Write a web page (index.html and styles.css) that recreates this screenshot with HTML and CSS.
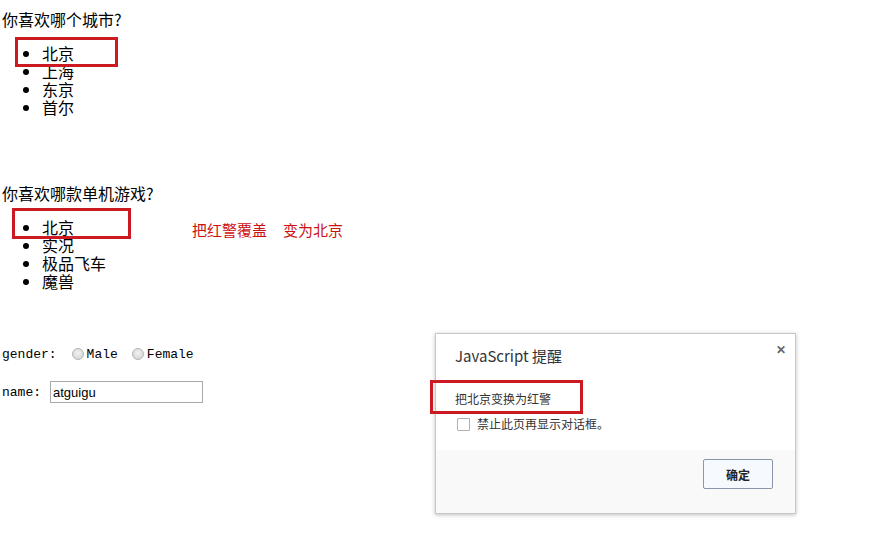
FILE: index.html
```html
<!DOCTYPE html>
<html lang="zh-CN">
<head>
    <meta charset="UTF-8">
    <title>DOM 练习</title>
    <link rel="stylesheet" href="styles.css">
</head>
<body>

<div class="page">
    <!-- 城市 -->
    <p class="question">你喜欢哪个城市?</p>
    <ul class="list" id="city">
        <li id="bj">北京</li>
        <li>上海</li>
        <li>东京</li>
        <li>首尔</li>
    </ul>

    <!-- 游戏 -->
    <p class="question question-game">你喜欢哪款单机游戏?</p>
    <div class="game-row">
        <ul class="list list-game" id="game">
            <li id="rl">北京</li>
            <li>实况</li>
            <li>极品飞车</li>
            <li>魔兽</li>
        </ul>
        <div class="actions">
            <span class="action">把红警覆盖</span>
            <span class="action">变为北京</span>
        </div>
    </div>

    <!-- 表单 -->
    <div class="form-row gender-row">
        <span class="field-label">gender:</span>
        <label class="radio radio-first"><input type="radio" name="gender" value="male">Male</label>
        <label class="radio"><input type="radio" name="gender" value="female">Female</label>
    </div>
    <div class="form-row name-row">
        <span class="field-label">name:</span>
        <input class="name-input" type="text" name="name" value="atguigu">
    </div>

    <!-- 标注框 -->
    <div class="mark mark-city"></div>
    <div class="mark mark-game"></div>
    <div class="mark mark-alert"></div>

    <!-- 浏览器 alert 对话框 -->
    <div class="alert-box">
        <div class="alert-head">
            <span class="alert-title">JavaScript 提醒</span>
            <span class="alert-close">&#x2715;</span>
        </div>
        <div class="alert-body">
            <p class="alert-msg">把北京变换为红警</p>
            <label class="alert-check"><span class="check-box"></span>禁止此页再显示对话框。</label>
        </div>
        <div class="alert-foot">
            <button class="alert-btn">确定</button>
        </div>
    </div>
</div>

</body>
</html>
```

FILE: styles.css
```css
/* base */
body {
    margin: 0;
    background: #ffffff;
    color: #000000;
    font-family: "Noto Sans CJK SC", sans-serif;
    font-size: 16px;
}
.page {
    position: relative;
    width: 869px;
    height: 542px;
    padding: 10px 2px 0;
    box-sizing: border-box;
}
/* questions and lists */
.question {
    margin: 0;
    line-height: 18px;
}
.question-game {
    margin-top: 68px;
}
.list {
    margin: 16px 0 0;
    padding-left: 40px;
    line-height: 18px;
}
.game-row {
    display: flex;
    align-items: flex-start;
}
.list-game {
    width: 150px;
}
.actions {
    display: flex;
    gap: 16px;
    margin-top: 19px;
    color: #cc1111;
    font-size: 15px;
    line-height: 18px;
}
/* form rows */
.form-row {
    font-family: "Liberation Mono", monospace;
    font-size: 13px;
    display: flex;
    align-items: center;
}
.gender-row {
    margin-top: 55px;
    height: 18px;
}
.name-row {
    margin-top: 18px;
    height: 22px;
}
.radio {
    display: flex;
    align-items: center;
    margin-left: 14px;
}
.radio-first {
    margin-left: 15px;
}
.radio input {
    -webkit-appearance: none;
    appearance: none;
    width: 12px;
    height: 12px;
    margin: 0 3px 0 0;
    border: 1px solid #b5b5b5;
    border-radius: 50%;
    background: radial-gradient(circle at 50% 40%, #f2f2f2, #cfcfcf);
}
.name-input {
    margin: 0 0 0 9px;
    width: 153px;
    height: 22px;
    box-sizing: border-box;
    border: 1px solid #a9a9a9;
    padding: 1px 2px;
    font-family: "Liberation Sans", Arial, sans-serif;
    font-size: 13px;
    color: #000;
}
/* red annotation frames */
.mark {
    position: absolute;
    border: 3px solid #cc1a22;
    box-sizing: border-box;
    z-index: 2;
}
.mark-city {
    left: 15px;
    top: 37px;
    width: 103px;
    height: 30px;
}
.mark-game {
    left: 12px;
    top: 208px;
    width: 119px;
    height: 31px;
}
.mark-alert {
    left: 430px;
    top: 380px;
    width: 153px;
    height: 34px;
}
/* alert dialog */
.alert-box {
    position: absolute;
    left: 435px;
    top: 333px;
    width: 361px;
    height: 181px;
    box-sizing: border-box;
    border: 1px solid #c8c8c8;
    background: #ffffff;
    box-shadow: 0 1px 4px rgba(0, 0, 0, 0.25);
    font-family: "Noto Sans CJK SC", sans-serif;
    color: #333333;
    display: flex;
    flex-direction: column;
}
.alert-head {
    display: flex;
    justify-content: space-between;
    padding: 10px 9px 0 19px;
    height: 36px;
    box-sizing: border-box;
}
.alert-title {
    font-size: 15px;
    line-height: 24px;
    color: #333;
}
.alert-close {
    font-size: 12px;
    font-weight: bold;
    color: #666;
    line-height: 12px;
    margin-top: -1px;
}
.alert-body {
    padding: 20px 20px 0 19px;
    height: 80px;
    box-sizing: border-box;
}
.alert-msg {
    margin: 0;
    font-size: 12px;
    line-height: 18px;
}
.alert-check {
    display: flex;
    align-items: center;
    margin-top: 9px;
    margin-left: 2px;
    font-size: 12px;
    line-height: 14px;
}
.check-box {
    width: 11px;
    height: 11px;
    border: 1px solid #b0b0b0;
    border-radius: 1px;
    margin-right: 7px;
    background: #fff;
}
.alert-foot {
    flex: 1;
    background: #f9f9f9;
    display: flex;
    justify-content: flex-end;
    align-items: flex-start;
    padding: 9px 22px 0 0;
}
.alert-btn {
    width: 70px;
    height: 30px;
    border: 1px solid #8a96a8;
    border-radius: 2px;
    background: #f6f9fd;
    font-family: "Noto Sans CJK SC", sans-serif;
    font-size: 12px;
    font-weight: bold;
    color: #222;
    padding: 0;
}
```
